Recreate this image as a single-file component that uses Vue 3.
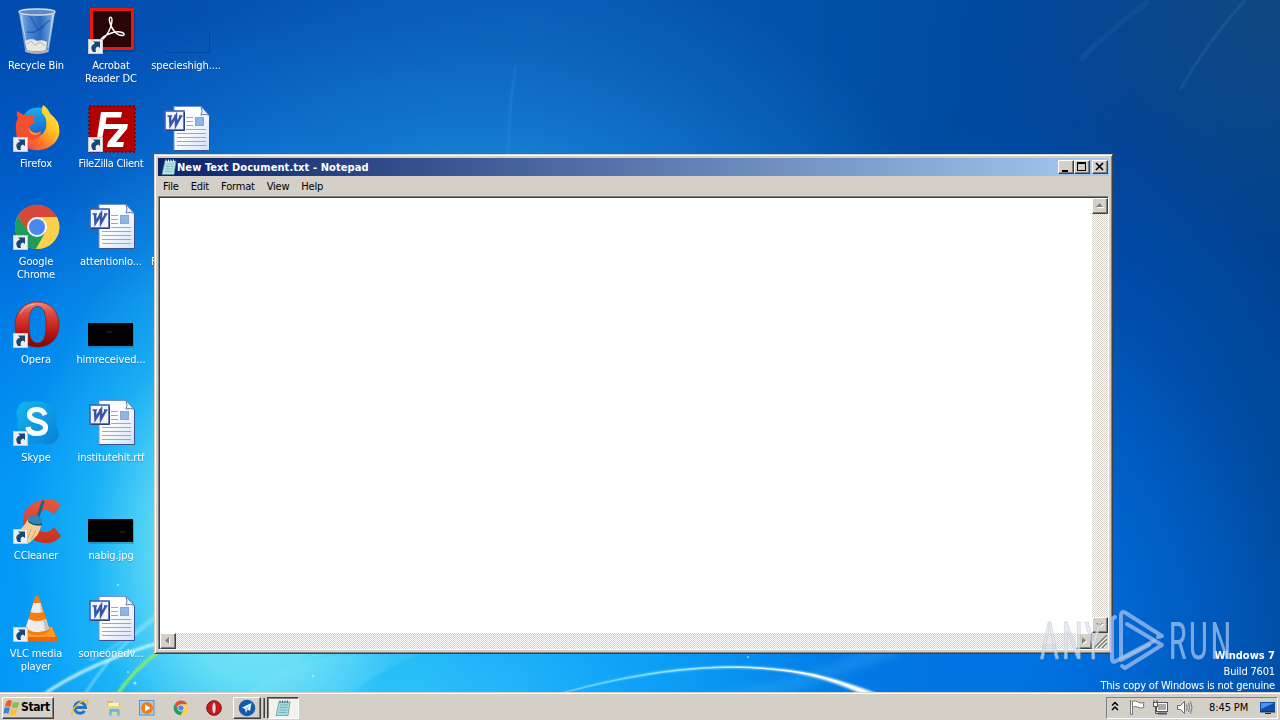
<script setup>
const icons = [
  { kind: 'bin', lines: ['Recycle Bin'] },
  { kind: 'firefox', lines: ['Firefox'], link: true },
  { kind: 'chrome', lines: ['Google', 'Chrome'], link: true },
  { kind: 'opera', lines: ['Opera'], link: true },
  { kind: 'skype', lines: ['Skype'], link: true },
  { kind: 'ccleaner', lines: ['CCleaner'], link: true },
  { kind: 'vlc', lines: ['VLC media', 'player'], link: true },
  { kind: 'acrobat', lines: ['Acrobat', 'Reader DC'], link: true },
  { kind: 'filezilla', lines: ['FileZilla Client'], link: true, tight: true },
  { kind: 'word', lines: ['attentionlo...'] },
  { kind: 'black', lines: ['himreceived...'], mark: 22 },
  { kind: 'word', lines: ['institutehit.rtf'] },
  { kind: 'black', lines: ['nabig.jpg'], mark: 36 },
  { kind: 'word', lines: ['someonedv...'] },
  { kind: 'faint', lines: ['specieshigh....'] },
  { kind: 'word', lines: [] },
  { kind: 'none', lines: ['F'], peek: true },
]
const menus = ['File', 'Edit', 'Format', 'View', 'Help']
</script>

<template>
  <div class="desktop">
    <svg class="wall" width="1280" height="720" viewBox="0 0 1280 720">
      <defs>
        <filter id="b1" x="-20%" y="-20%" width="140%" height="140%"><feGaussianBlur stdDeviation="1" /></filter>
        <filter id="b6" x="-20%" y="-50%" width="140%" height="200%"><feGaussianBlur stdDeviation="5" /></filter>
        <linearGradient id="arc" x1="560" x2="880" y1="0" y2="0" gradientUnits="userSpaceOnUse">
          <stop offset="0" stop-color="#7fdcff" stop-opacity=".6" /><stop offset=".5" stop-color="#a8e9ff" /><stop offset=".75" stop-color="#fff" />
        </linearGradient>
      </defs>
      <path d="M660 700Q780 690 860 652L900 640L900 654Q800 690 760 700Z" fill="#5cc4ff" opacity=".2" filter="url(#b6)" />
      <path d="M560 693C640 671 690 666 738 666.500C800 668 830 676 878 694L862 694C820 676 790 669 738 668C690 668 640 673 560 693.500Z" fill="url(#arc)" filter="url(#b1)" />
      <path d="M560 693.500C640 672 690 667 738 667C800 669 830 677 870 694" fill="none" stroke="url(#arc)" stroke-width="1.600" />
      <g fill="none" filter="url(#b1)">
        <path d="M40 697C75 672 115 655 165 641" stroke="#d8fbff" stroke-width="3" opacity=".85" />
        <path d="M85 694C105 663 125 640 160 615" stroke="#bdf3ff" stroke-width="2" opacity=".6" />
        <path d="M90 660C120 645 140 628 160 610" stroke="#bdf3ff" stroke-width="1.500" opacity=".5" />
        <path d="M116 696C128 678 142 664 158 652" stroke="#8cf060" stroke-width="3" />
        <path d="M245 694C275 670 300 660 350 654L420 654Q380 670 350 694Z" fill="#c8f4ff" opacity=".1" />
        <path d="M508 170Q508 110 516 65" stroke="#4d9ce8" stroke-width="2" opacity=".3" />
        <path d="M1180 90Q1205 45 1245 0" stroke="#4a90c4" stroke-width="1.500" opacity=".4" />
        <path d="M1080 60Q1110 30 1150 0" stroke="#3f83bc" stroke-width="6" opacity=".12" />
      </g>
      <g fill="#d8fbff" opacity=".7"><circle cx="135" cy="683" r="1.500" /><circle cx="118" cy="585" r="1" /><circle cx="128" cy="672" r="1" /><circle cx="313" cy="676" r="1" /><circle cx="748" cy="657" r="1" /></g>
    </svg>

    <div class="grid">
      <div v-for="(it, i) in icons" :key="i" class="item" :class="{ peek: it.peek, tight: it.tight }">
        <svg class="ico" width="48" height="48" viewBox="0 0 48 48">
          <g v-if="it.kind === 'bin'">
            <defs><linearGradient id="bin" x1="0" x2="1" y1="0" y2="0"><stop offset="0" stop-color="#b9d5ef" /><stop offset=".25" stop-color="#5a94d6" /><stop offset=".6" stop-color="#2f6fc2" /><stop offset=".85" stop-color="#79a9de" /><stop offset="1" stop-color="#d3e3f3" /></linearGradient></defs>
            <path d="M7 6L13 44Q25 49 37 44L43 6Z" fill="url(#bin)" opacity=".85" />
            <path d="M13 35Q20 31 25 35Q31 33 35 36L34 44Q25 47 15 44Z" fill="#e9e5df" /><path d="M15 38l4-3 4 4 5-3 5 4" fill="none" stroke="#b8b4b4" />
            <path d="M13 43Q25 49 37 43L36.500 46Q25 50 13.500 46Z" fill="#b7b5b0" />
            <path d="M18 10L26 24L38 14M15 26Q24 28 32 20" fill="none" stroke="#17479d" stroke-width="1.300" opacity=".6" />
            <ellipse cx="25" cy="6" rx="18" ry="3" fill="#5d8cc4" stroke="#d3dde4" stroke-width="1.400" />
            <path d="M9 9L15 42M41 9L36 42" stroke="#e9f4fc" opacity=".65" />
          </g>
          <g v-else-if="it.kind === 'acrobat'">
            <rect x="4" y="4" width="44" height="42" fill="#001c60" opacity=".35" />
            <rect x="3" y="2" width="44" height="42" fill="#e81a0c" /><rect x="6" y="5" width="38" height="36" fill="#2a0508" />
            <path d="M12 36C20 32 25 20 25 14C25 10 21.500 10 22.500 15C24 23 30 30 36 29.500C40 27.500 33 24.500 26 26.500C19 28.500 14 32 12 36Z" fill="none" stroke="#fff" stroke-width="1.400" />
          </g>
          <g v-else-if="it.kind === 'firefox'">
            <defs>
              <linearGradient id="fx" x1="1" x2=".1" y1="0" y2="1"><stop offset="0" stop-color="#fff14a" /><stop offset=".4" stop-color="#ffc228" /><stop offset=".65" stop-color="#ff7a26" /><stop offset="1" stop-color="#f0304f" /></linearGradient>
              <linearGradient id="fb" x1="0" x2="0" y1="0" y2="1"><stop offset="0" stop-color="#18b0f2" /><stop offset="1" stop-color="#1a4fc0" /></linearGradient>
            </defs>
            <circle cx="26" cy="21" r="17.500" fill="url(#fb)" />
            <path d="M31 1Q36 4 38 10Q48 16 47.500 28A22 20 0 0 1 4 30Q8 28 14 27Q18 33 25 32Q32 31 34 24Q36 14 30 9Q29 5 31 1Z" fill="url(#fx)" />
            <path d="M6 14Q4 11 5 7Q9 9 13 12Q18 10 23 12Q20 15 23 19L17 22Q17 28 24 29Q27 29 29 27Q29 34 22 36Q8 38 4 28Q3 19 6 14Z" fill="#f4502f" />
            <path d="M17 22Q17 28 24 29Q27 29 29 27Q27 31 22 31Q16 30 17 22Z" fill="#ff9a2a" />
          </g>
          <g v-else-if="it.kind === 'filezilla'">
            <rect x="2" y="2" width="46" height="46" fill="#b20000" stroke="#720006" stroke-width="1.500" stroke-dasharray="2 2" />
            <path d="M14 8H35L34 13.500H19.500L18.500 20H27L26 25H17L14 40H9Z" fill="#fff" />
            <path d="M26 20H41L40 25L29 38H37L36 43H20L21 38L32 25H25Z" fill="#fff" />
          </g>
          <g v-else-if="it.kind === 'chrome'">
            <circle cx="25" cy="25" r="22" fill="#fbd04c" />
            <path d="M25 15H45A22 22 0 0 0 5.950 14L16 30Z" fill="#d9493a" />
            <path d="M5.950 14A22 22 0 0 0 24 47L33.500 30L16.500 30Z" fill="#1f9c5a" /><path d="M25 15H45A22 22 0 0 1 24 47L34 30Z" fill="#fbd04c" />
            <circle cx="25" cy="25" r="10" fill="#f3f3f3" /><circle cx="25" cy="25" r="8" fill="#4a88ee" />
          </g>
          <g v-else-if="it.kind === 'opera'">
            <defs><linearGradient id="op" x1="0" x2="0" y1="0" y2="1"><stop offset="0" stop-color="#ee8a80" /><stop offset=".25" stop-color="#dc4840" /><stop offset=".65" stop-color="#c01713" /><stop offset="1" stop-color="#790509" /></linearGradient></defs>
            <path fill-rule="evenodd" d="M25 2C39 2 47 12 47 25C47 38 39 47 25 47C12 47 3 38 3 25C3 12 12 2 25 2ZM25.500 6.500C19 6.500 17 14 17 25C17 36 19 43 25.500 43C32 43 34 36 34 25C34 14 32 6.500 25.500 6.500Z" fill="url(#op)" stroke="#941713" stroke-width=".7" />
            <path d="M8 14Q13 5 23 4" fill="none" stroke="#ffd8d0" opacity=".6" />
          </g>
          <g v-else-if="it.kind === 'skype'">
            <defs><linearGradient id="sk" x1="0" x2="1" y1="0" y2="1"><stop offset="0" stop-color="#13b5f2" /><stop offset="1" stop-color="#0780d4" /></linearGradient></defs>
            <path d="M6 10Q9 2 17 4Q34 0 42 12Q46 20 44 28Q50 37 43 44Q38 48 31 45Q16 48 9 38Q4 30 6 22Q3 15 6 10Z" fill="url(#sk)" />
            <path d="M33 17Q31 11.500 25 11.500Q17.500 11.500 17.500 17Q17.500 21 25 23Q33.500 25 33.500 29.500Q33.500 35.500 25 35.500Q17 35.500 16 29" fill="none" stroke="#fff" stroke-width="5.200" />
          </g>
          <g v-else-if="it.kind === 'ccleaner'">
            <defs><linearGradient id="cc" x1="0" x2="0" y1="0" y2="1"><stop offset="0" stop-color="#e8583f" /><stop offset="1" stop-color="#c82f1c" /></linearGradient></defs>
            <path d="M49 9Q42 1 30 4Q11 9 11 25Q11 44 32 47Q43 48 49 40L42 31Q38 37 32 36Q25 35 24 25Q25 15 33 14Q38 14 42 18Z" fill="url(#cc)" />
            <path d="M16 23L29 30Q28 39 17 47Q6 46 2 38Q11 33 16 23Z" fill="#f3cf97" /><path d="M8 36L6 41M13 34L10 43M19 33L15 45M24 34L19 44" stroke="#c99a5e" stroke-width=".8" />
            <path d="M31 6L26 21" stroke="#225f91" stroke-width="3" stroke-linecap="round" />
            <path d="M16 22Q20 18 25 19Q30 21 30 29Q23 31 16 26Z" fill="#3184b4" /><path d="M17 26Q23 30 30 28" fill="none" stroke="#17527f" stroke-width="1.500" />
          </g>
          <g v-else-if="it.kind === 'vlc'">
            <path d="M14 33L40 33L46 45L45 47H12L11 44Z" fill="#e96a06" /><path d="M15 33H40L44 43H12Z" fill="#ff9b26" />
            <path d="M23 3Q25 1 27 3L38 36Q34 41 25 41Q16 41 13 36Z" fill="#f67c0d" />
            <path d="M21.500 9L28.500 9L31 18Q25 20 18.500 18ZM16.500 25Q25 29 34 25L37 35Q25 42 13.500 34Z" fill="#ececec" />
            <path d="M28 9L31 18L29 18.500ZM31 26L34 25L37 35L33 37Z" fill="#c8c4c0" />
          </g>
          <g v-else-if="it.kind === 'word'">
            <defs><linearGradient id="dg" x1="0" x2="1" y1="0" y2="1"><stop offset=".4" stop-color="#fff" /><stop offset="1" stop-color="#d3e0f8" /></linearGradient></defs>
            <path d="M12 2.500H39L47.500 11.500V46.500H12Z" fill="url(#dg)" stroke="#7191cb" /><path d="M12 46.500H47.500V12" fill="none" stroke="#3a5193" />
            <path d="M39 2.500Q41 8 39 11Q44 9.500 47.500 11.500Z" fill="#edf4ff" stroke="#5b78b0" />
            <path d="M24 13.500H31M24 17.500H31M24 21.500H31M15 29.500H44M15 33.500H44M15 37.500H44M15 41.500H44M24 25.500H44" stroke="#8fa8e0" />
            <rect x="33.500" y="13.500" width="8" height="8" fill="#8fb5e4" stroke="#86a6da" />
            <rect x="3" y="7" width="19" height="19" fill="#f1f5ff" stroke="#3d62b4" stroke-width="1.600" /><path d="M22.500 8V26.500H4" fill="none" stroke="#283f88" />
            <path d="M5.500 12H10M12 12H15M17 12H20.500" stroke="#3955a8" stroke-width="1.500" /><path d="M8 12L8.500 21L14 12L14 21L19 12" fill="none" stroke="#3955a8" stroke-width="2.500" />
          </g>
          <g v-else-if="it.kind === 'black'">
            <rect x="2" y="24" width="45" height="24" fill="#1c6b92" opacity=".4" /><rect x="1" y="23" width="45" height="23" fill="#000" /><path :d="`M${it.mark - 3} ${it.mark === 22 ? 32 : 36}h6`" stroke="#3b2a28" />
          </g>
          <g v-else-if="it.kind === 'faint'"><path d="M2 46.500H47.500V25" fill="none" stroke="#013d96" opacity=".65" /><path d="M18 36.500h10" stroke="#0052b0" /></g>
          <g v-if="it.link">
            <rect x="1.500" y="33.500" width="14" height="14" fill="#eee" stroke="#c5cbd2" />
            <path d="M6 46Q2.500 41 6 38.500L8 37.500L6 35.500L13 35.500V42L11 40.500Q7.500 41.500 9 46Z" fill="#174776" />
          </g>
        </svg>
        <div class="label"><div v-for="l in it.lines" :key="l">{{ l }}</div></div>
      </div>
    </div>

    <div class="build"><b>Windows 7</b><span>Build 7601</span><span>This copy of Windows is not genuine</span></div>

    <div class="window">
      <div class="title">
        <svg width="16" height="16" viewBox="0 0 16 16"><path d="M4 2H15L13 15.500H1Z" fill="#b8e3e8" stroke="#5d8f9a" stroke-width=".7" /><path d="M5 5H13M4.700 7.500H12.500M4.300 10H12M4 12.500H11.500" stroke="#76b8c4" stroke-width=".8" /><path d="M5 .5V3M7.500 .5V3M10 .5V3M12.500 .5V3" stroke="#e7f3f5" /></svg>
        <span>New Text Document.txt - Notepad</span>
        <div class="btn min"><svg width="16" height="14"><path d="M4 10H10V12H4Z" /></svg></div>
        <div class="btn max"><svg width="16" height="14"><path fill-rule="evenodd" d="M3 2H12V11H3ZM4 4V10H11V4Z" /></svg></div>
        <div class="btn close"><svg width="16" height="14"><path d="M4 3L11 10M11 3L4 10" stroke="#000" stroke-width="1.700" /></svg></div>
      </div>
      <div class="menu"><span v-for="m in menus" :key="m">{{ m }}</span></div>
      <div class="edit">
        <div class="page"></div>
        <div class="bar v">
          <div class="sb"><svg width="16" height="16"><path d="M5 10L8.500 6L12 10Z" fill="#fff" /><path d="M4 9L7.500 5L11 9Z" fill="#808080" /></svg></div>
          <div class="sb"><svg width="16" height="16"><path d="M5 7L8.500 11L12 7Z" fill="#fff" /><path d="M4 6L7.500 10L11 6Z" fill="#808080" /></svg></div>
        </div>
        <div class="bar h">
          <div class="sb"><svg width="16" height="16"><path d="M10 5L6 8.500L10 12Z" fill="#fff" /><path d="M9 4L5 7.500L9 11Z" fill="#808080" /></svg></div>
          <div class="sb"><svg width="16" height="16"><path d="M7 5L11 8.500L7 12Z" fill="#fff" /><path d="M6 4L10 7.500L6 11Z" fill="#808080" /></svg></div>
        </div>
        <div class="grip"><svg width="16" height="16"><path d="M2 15L15 2M6 15L15 6M10 15L15 10" stroke="#808080" stroke-width="1.500" /><path d="M4 15L15 4M8 15L15 8M12 15L15 12" stroke="#fff" /></svg></div>
      </div>
    </div>

    <div class="taskbar">
      <div class="start">
        <svg width="18" height="17" viewBox="0 0 16 16"><path d="M3 2Q6 0 8 2L6.500 7.500Q4 6 1 7.500Z" fill="#e8602c" /><path d="M9 2.500Q12 4 15 2.500L13.500 8Q11 9 7.500 8Z" fill="#8cc04a" /><path d="M.8 8.500Q4 7 6 8.500L4.500 14Q2 12.500 0 14Z" fill="#3d83d2" /><path d="M7 9Q10 10.500 13 9L11.500 14.500Q8 16 5.500 14.500Z" fill="#f7c42d" /></svg>
        <b>Start</b>
      </div>
      <div class="quick">
        <svg viewBox="0 0 18 18"><path d="M13.500 12A5.500 5.500 0 1 1 14.500 8.500H5" fill="none" stroke="#1f72c6" stroke-width="3" /><path d="M1.500 16Q-1 13 5 7Q12 0 16 1.500Q18 3 15.500 6" fill="none" stroke="#efbf30" stroke-width="1.500" /></svg>
        <svg viewBox="0 0 18 18"><path d="M2 2H7L8 4H15V15H2Z" fill="#dbb850" /><path d="M3 4H14V7H3Z" fill="#fff1b0" /><path d="M2 7H16L15.500 15H2Z" fill="#f0d470" /><path d="M4 17V11Q4 9.500 6 9.500H13Q15 9.500 15 11V17H12V13H7V17Z" fill="#69b3e1" stroke="#b8e1f4" stroke-width=".6" /></svg>
        <svg viewBox="0 0 18 18"><rect x="1.500" y="1.500" width="14.500" height="14.500" fill="#a9cdec" stroke="#5c91c8" /><circle cx="9" cy="9" r="6" fill="#f07c12" /><path d="M7 5.500L12.500 9L7 12.500Z" fill="#fff" /></svg>
        <svg viewBox="0 0 50 50"><path d="M25 15H43A20 20 0 0 0 8 14L16 30Z" fill="#df5041" /><path d="M8 14A20 20 0 0 0 24 45L33.500 30L16.500 30Z" fill="#1fa05f" /><path d="M25 15H43A20 20 0 0 1 24 45L34 30Z" fill="#fbd04c" /><circle cx="25" cy="25" r="9.500" fill="#f3f3f3" /><circle cx="25" cy="25" r="7.500" fill="#4a88ee" /></svg>
        <svg viewBox="0 0 18 18"><circle cx="9" cy="9" r="7.300" fill="#c51b20" stroke="#890d12" /><ellipse cx="9" cy="9" rx="2" ry="5.700" fill="#e9d6d0" stroke="#8a0f12" stroke-width=".5" /></svg>
      </div>
      <div class="task bird"><svg width="18" height="18" viewBox="0 0 18 18"><circle cx="9" cy="9" r="8.300" fill="#125cab" /><path d="M13.500 4L12 12L9.500 10.500L8 14L7 10L4 8.500Z" fill="#edf6ff" /><path d="M12.500 5.500L7 10L9 10.500Z" fill="#9fc4e6" /></svg></div>
      <i class="edge"></i>
      <div class="task open"><svg width="16" height="16" viewBox="0 0 16 16"><path d="M4 2H15L13 15.500H1Z" fill="#a6dce2" stroke="#5d8f9a" stroke-width=".7" /><path d="M5 5H13M4.700 7.500H12.500M4.300 10H12M4 12.500H11.500" stroke="#5aa8b8" stroke-width=".8" /><path d="M5 .5V3M7.500 .5V3M10 .5V3M12.500 .5V3" stroke="#557" /></svg></div>
      <div class="tray">
        <svg class="t1" width="8" height="12"><path d="M1 4.500L4 1.500L7 4.500M1 9L4 6L7 9" fill="none" stroke="#000" stroke-width="1.500" /></svg>
        <svg class="t2" width="16" height="16"><path d="M1.500 0V14.500H3.500V8" fill="#fff" stroke="#777" /><path d="M3.500 1.500Q6 0 9 2Q11 4 15 2.500Q14 5 15 7.500Q11 9 8.500 7Q6 5.500 3.500 7.500Z" fill="#fff" stroke="#777" /></svg>
        <svg class="t3" width="17" height="16"><rect x="5.500" y="3.500" width="9" height="7" fill="#aaa" stroke="#fff" /><rect x="4.500" y="2.500" width="11" height="9" fill="none" stroke="#555" /><path d="M6 13.500H15" stroke="#555" stroke-width="2" /><rect x="1.500" y="2.500" width="4" height="4" fill="#fff" stroke="#555" /><path d="M2 0V2M5 0V2M3.500 7V13.500H7" fill="none" stroke="#555" /></svg>
        <svg class="t4" width="17" height="16"><path d="M1.500 5.500H4.500L8.500 1.500V13.500L4.500 9.500H1.500Z" fill="#fff" stroke="#666" /><path d="M10.500 4.500Q12 7.500 10.500 10.500M12.500 3Q14.500 7.500 12.500 12M14.500 1.500Q17.500 7.500 14.500 13.500" fill="none" stroke="#777" /></svg>
        <span>8:45 PM</span>
        <svg class="t5" width="16" height="14"><path d="M0 1H15V10H0Z" fill="#0d4da8" /><path d="M1 2H14L1 8Z" fill="#4b98e2" /><path d="M0 10H15V11.500H0ZM5 12H11V13H5Z" fill="#234" /></svg>
      </div>
    </div>

    <svg class="mark" width="200" height="70" viewBox="0 0 200 70">
      <g font-family="Roboto, 'Open Sans', sans-serif" font-size="51" letter-spacing="3">
        <text x="4.500" y="54" textLength="65" lengthAdjust="spacingAndGlyphs" fill="#dde3ea" stroke="#aab2bd" stroke-width=".6" opacity=".7">ANY</text>
        <text x="133.500" y="54" textLength="65" lengthAdjust="spacingAndGlyphs" fill="#b4cdf2" opacity=".68">RUN</text>
      </g>
      <g fill="none" stroke="#a9c4ee" stroke-opacity=".72" stroke-width="4" stroke-linejoin="round" stroke-linecap="round">
        <path d="M123 32L127 31L90 7.500Q86 6 86 10V55L114 40" />
        <path d="M92 19L127 40L90 63L87 61" />
        <path d="M80 12L77 14V55Q78 58 81 56L119 36" />
      </g>
    </svg>
  </div>
</template>

<style>
html, body { margin: 0; overflow: hidden; }
</style>
<style scoped>
.desktop {
  position: relative; width: 1280px; height: 720px; overflow: hidden; display: flex; flex-direction: column; justify-content: flex-end;
  font-family: "DejaVu Sans Condensed", "DejaVu Sans", sans-serif; font-stretch: condensed; font-size: 11px; line-height: 13px; letter-spacing: -.25px; color: #000;
  background:
    radial-gradient(ellipse 290px 430px at 250px 550px, rgba(140,236,246,1) 0, rgba(110,228,246,.9) 30%, rgba(40,195,246,.6) 55%, rgba(20,170,245,.2) 80%, transparent 100%),
    radial-gradient(ellipse 450px 270px at 480px 230px, rgba(40,160,222,.75) 0, rgba(32,140,212,.45) 45%, transparent 100%),
    radial-gradient(ellipse 420px 200px at 420px 690px, rgba(60,205,250,.8) 0, rgba(30,175,250,.5) 50%, transparent 100%),
    radial-gradient(ellipse 360px 520px at 1030px 640px, rgba(0,125,238,.7) 0, rgba(0,115,230,.45) 40%, transparent 100%),
    radial-gradient(ellipse 1080px 680px at 230px 700px, #009cfa 0, #0094f6 38%, rgba(0,130,236,.9) 60%, rgba(0,100,212,.7) 78%, transparent 100%),
    radial-gradient(ellipse 300px 260px at 1280px 0, rgba(20,75,125,.8) 0, transparent 100%),
    linear-gradient(95deg, #004cb0 0, #0858b4 40%, #0050a6 65%, #00429a 85%, #00428e 100%);
}
.wall { position: absolute; left: 0; top: 0; }
.grid { position: absolute; left: 0; top: 6px; display: grid; grid-auto-flow: column; grid-template-rows: repeat(7, 98px); grid-auto-columns: 75px; }
.item { display: flex; flex-direction: column; align-items: center; width: 72px; letter-spacing: -.1px; }
.tight { letter-spacing: -.28px; }
.ico { display: block; overflow: visible; }
.label { margin-top: 5px; text-align: center; color: #fff; white-space: nowrap; text-shadow: 0 1px 1px rgba(0,50,110,.3); }
.peek .label { align-self: flex-start; margin-left: 1px; }
.build { position: absolute; right: 5px; top: 649px; display: flex; flex-direction: column; align-items: flex-end; color: #fff; gap: 3px; white-space: nowrap; letter-spacing: -.17px; }
.build b { letter-spacing: 0; }
.build span + span { margin-top: -2px; }
.window { position: absolute; left: 154px; top: 154px; width: 959px; height: 500px; box-sizing: border-box; background: #d4d0c8; border: 1px solid; border-color: #d4d0c8 #404040 #404040 #d4d0c8; box-shadow: inset 1px 1px #fff, inset -1px -1px #808080; padding: 3px; display: flex; flex-direction: column; }
.title { height: 18px; display: flex; align-items: center; padding: 0 1px 0 3px; background: linear-gradient(90deg, #0a246a, #a6caf0); color: #fff; font-weight: bold; }
.title span { flex: 1; letter-spacing: .09px; }
.btn, .sb, .start, .task { box-sizing: border-box; background: #d4d0c8; border: 1px solid; border-color: #fff #404040 #404040 #fff; box-shadow: inset -1px -1px #808080; }
.btn { width: 16px; height: 14px; }
.btn svg, .sb svg { display: block; margin: -1px; }
.close { margin-left: 2px; }
.menu { height: 20px; display: flex; align-items: center; gap: 12px; padding-left: 5px; letter-spacing: -.2px; }
.edit { flex: 1; display: grid; grid-template-columns: 1fr 16px; grid-template-rows: 1fr 16px; border: 1px solid; border-color: #808080 #fff #fff #808080; box-shadow: inset 1px 1px #404040; padding: 1px 0 0 1px; }
.page { background: #fff; }
.bar { display: flex; justify-content: space-between; background: repeating-conic-gradient(#fff 0 25%, #d4d0c8 0 50%) 0 0 / 2px 2px; }
.v { flex-direction: column; }
.sb { width: 16px; height: 16px; }
.grip { background: #d4d0c8; }
.taskbar { position: relative; height: 28px; box-sizing: border-box; background: #d4d0c8; border-top: 1px solid #d4d0c8; box-shadow: inset 0 1px #fff; display: flex; align-items: center; padding: 2px 2px 0; }
.start { width: 52px; height: 22px; display: flex; align-items: center; padding-left: 0; font-size: 12px; letter-spacing: -.4px; }
.start svg { flex: none; }
.quick { display: flex; gap: 15.500px; margin-left: 17px; }
.quick svg { width: 18px; height: 18px; }
.task { display: flex; align-items: center; justify-content: center; height: 22px; }
.bird { width: 28px; margin-left: 10px; }
.edge { width: 3px; height: 20px; border-right: 1px solid #404040; box-shadow: inset -1px 0 #808080; }
.open { width: 32px; margin-left: 2px; border-color: #404040 #fff #fff #404040; background: #f4f2ee; box-shadow: inset 1px 1px #808080; }
.tray { margin-left: auto; width: 172px; height: 22px; box-sizing: border-box; border: 1px solid; border-color: #808080 #fff #fff #808080; display: flex; align-items: center; padding-left: 4px; white-space: nowrap; }
.t1 { margin-top: -2px; } .t2 { margin-left: 10px; } .t3 { margin-left: 7px; } .t4 { margin-left: 7px; }
.tray span { margin-left: 16px; flex: 1; letter-spacing: -.1px; }
.t5 { margin-right: 1px; }
.mark { position: absolute; left: 1035px; top: 605px; }
</style>
